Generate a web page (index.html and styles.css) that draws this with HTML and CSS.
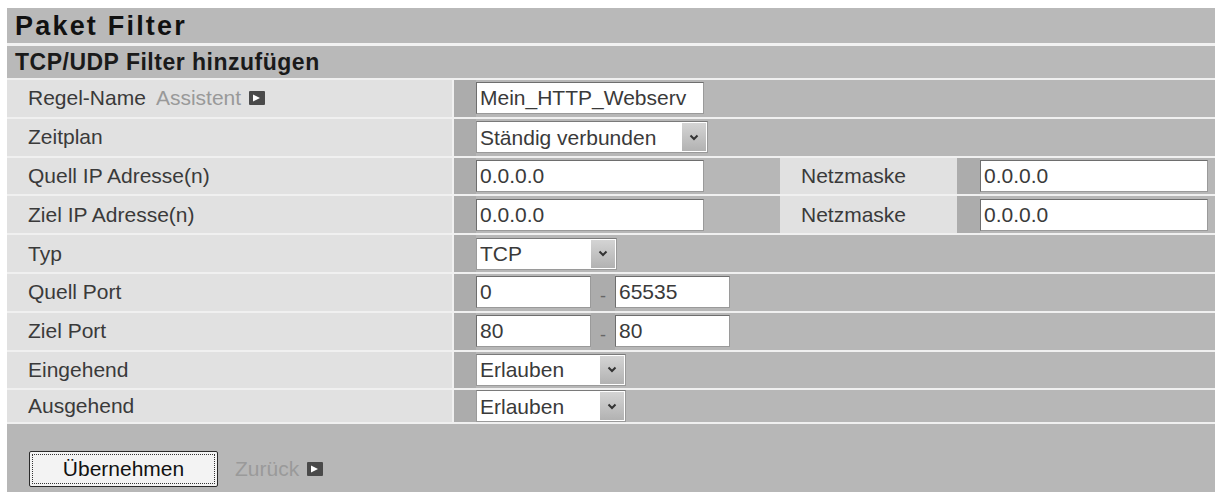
FILE: index.html
```html
<!DOCTYPE html>
<html lang="de">
<head>
    <meta charset="UTF-8">
    <title>Paket Filter</title>
    <link rel="stylesheet" href="styles.css">
</head>
<body>
    <div class="panel">
        <div class="title">Paket Filter</div>
        <div class="subtitle">TCP/UDP Filter hinzufügen</div>

        <form class="filter-form" onsubmit="return false">
            <div class="row">
                <div class="label">Regel-Name
                    <a class="link assist">Assistent
                        <svg class="go" width="16" height="14" viewBox="0 0 16 14"><rect width="16" height="14" rx="1" fill="#4a4a4a"/><polygon points="4,3.5 11,7 4,10.5" fill="#fff"/></svg>
                    </a>
                </div>
                <div class="stripe"></div>
                <div class="value"><input type="text" class="field ip" value="Mein_HTTP_Webserv"></div>
            </div>

            <div class="row">
                <div class="label">Zeitplan</div>
                <div class="stripe"></div>
                <div class="value">
                    <div class="pick w-plan">
                        <select><option>Ständig verbunden</option></select>
                        <span class="arrow"><svg width="10" height="7" viewBox="0 0 10 7"><path d="M1.5 1.5 L5 5 L8.5 1.5" stroke="#333" stroke-width="2" fill="none"/></svg></span>
                    </div>
                </div>
            </div>

            <div class="row row-mask">
                <div class="label">Quell IP Adresse(n)</div>
                <div class="stripe"></div>
                <div class="value"><input type="text" class="field ip" value="0.0.0.0"></div>
                <div class="label plain">Netzmaske</div>
                <div class="stripe"></div>
                <div class="value"><input type="text" class="field ip" value="0.0.0.0"></div>
            </div>

            <div class="row row-mask">
                <div class="label">Ziel IP Adresse(n)</div>
                <div class="stripe"></div>
                <div class="value"><input type="text" class="field ip" value="0.0.0.0"></div>
                <div class="label plain">Netzmaske</div>
                <div class="stripe"></div>
                <div class="value"><input type="text" class="field ip" value="0.0.0.0"></div>
            </div>

            <div class="row">
                <div class="label">Typ</div>
                <div class="stripe"></div>
                <div class="value">
                    <div class="pick w-type">
                        <select><option>TCP</option><option>UDP</option></select>
                        <span class="arrow"><svg width="10" height="7" viewBox="0 0 10 7"><path d="M1.5 1.5 L5 5 L8.5 1.5" stroke="#333" stroke-width="2" fill="none"/></svg></span>
                    </div>
                </div>
            </div>

            <div class="row row-port">
                <div class="label">Quell Port</div>
                <div class="stripe"></div>
                <div class="value"><input type="text" class="field port" value="0"></div>
                <div class="stripe dash">-</div>
                <div class="value"><input type="text" class="field port" value="65535"></div>
                <div class="value"></div>
            </div>

            <div class="row row-port">
                <div class="label">Ziel Port</div>
                <div class="stripe"></div>
                <div class="value"><input type="text" class="field port" value="80"></div>
                <div class="stripe dash">-</div>
                <div class="value"><input type="text" class="field port" value="80"></div>
                <div class="value"></div>
            </div>

            <div class="row">
                <div class="label">Eingehend</div>
                <div class="stripe"></div>
                <div class="value">
                    <div class="pick w-allow">
                        <select><option>Erlauben</option><option>Verweigern</option></select>
                        <span class="arrow"><svg width="10" height="7" viewBox="0 0 10 7"><path d="M1.5 1.5 L5 5 L8.5 1.5" stroke="#333" stroke-width="2" fill="none"/></svg></span>
                    </div>
                </div>
            </div>

            <div class="row row-last">
                <div class="label">Ausgehend</div>
                <div class="stripe"></div>
                <div class="value">
                    <div class="pick w-allow">
                        <select><option>Erlauben</option><option>Verweigern</option></select>
                        <span class="arrow"><svg width="10" height="7" viewBox="0 0 10 7"><path d="M1.5 1.5 L5 5 L8.5 1.5" stroke="#333" stroke-width="2" fill="none"/></svg></span>
                    </div>
                </div>
            </div>

            <div class="actions">
                <button type="submit" class="btn">Übernehmen</button>
                <a class="link back">Zurück
                    <svg class="go" width="16" height="14" viewBox="0 0 16 14"><rect width="16" height="14" rx="1" fill="#4a4a4a"/><polygon points="4,3.5 11,7 4,10.5" fill="#fff"/></svg>
                </a>
            </div>
        </form>
    </div>
</body>
</html>
```

FILE: styles.css
```css
* {
    margin: 0;
    padding: 0;
    box-sizing: border-box;
}

body {
    background-color: #fff;
    font-family: 'Liberation Sans', Arial, sans-serif;
    font-size: 21px;
    color: #3a3a3a;
}

input, select, button {
    font: inherit;
}

.panel {
    margin: 8px 6px 0 7px;
}

.title {
    height: 35px;
    padding: 2px 0 0 8px;
    background-color: #b9b9b9;
    color: #111;
    font-size: 27px;
    font-weight: bold;
    letter-spacing: 2.2px;
    line-height: 32px;
}

.subtitle {
    height: 35px;
    padding: 1px 0 0 8px;
    border-top: 3px solid #f2f2f2;
    background-color: #b9b9b9;
    color: #1a1a1a;
    font-size: 23px;
    font-weight: bold;
    letter-spacing: 0.5px;
    line-height: 30px;
}

.row {
    display: grid;
    grid-template-columns: 447px 22px 1fr;
    height: 38.8px;
    border-top: 2px solid #f0f0f0;
    background-color: #b7b7b7;
}

.row-mask {
    grid-template-columns: 447px 22px 304px 177px 23px 1fr;
}

.row-port {
    grid-template-columns: 447px 22px 115px 24px 115px 1fr;
}

.row-last {
    height: 33.6px;
}

.label {
    display: flex;
    align-items: center;
    padding-left: 21px;
    background-color: #e1e1e1;
    border-right: 2px solid #f0f0f0;
    white-space: nowrap;
}

.label.plain {
    border-right: none;
}

.stripe {
    background-color: #acacac;
}

.dash {
    display: flex;
    align-items: flex-end;
    justify-content: center;
    padding-bottom: 4px;
    color: #666;
    font-size: 18px;
}

.value {
    display: flex;
    align-items: center;
}

.field {
    height: 32px;
    padding: 0 3px;
    border: 1px solid #9a9a9a;
    border-top-color: #6e6e6e;
    border-left-color: #6e6e6e;
    background-color: #fff;
    color: #3a3a3a;
    outline: none;
}

.field.ip {
    width: 228px;
}

.field.port {
    width: 115px;
}

.link {
    display: inline-flex;
    align-items: center;
    color: #999;
    cursor: pointer;
}

.assist {
    margin-left: 10px;
}

.go {
    margin-left: 8px;
}

/* Auswahllisten mit eigenem Pfeil */
.pick {
    position: relative;
    height: 32px;
}

.pick select {
    width: 100%;
    height: 100%;
    padding: 0 28px 0 3px;
    border: 1px solid #9a9a9a;
    border-top-color: #7a7a7a;
    background-color: #fff;
    color: #3a3a3a;
    appearance: none;
    -webkit-appearance: none;
    outline: none;
}

.pick .arrow {
    position: absolute;
    top: 2px;
    right: 2px;
    bottom: 2px;
    width: 24px;
    display: flex;
    align-items: center;
    justify-content: center;
    background: linear-gradient(#d4d4d4, #b2b2b2);
    pointer-events: none;
}

.w-plan { width: 232px; }
.w-type { width: 141px; }
.w-allow { width: 150px; }

.actions {
    display: flex;
    align-items: center;
    gap: 17px;
    padding: 27px 22px 12px;
    border-top: 2px solid #f0f0f0;
    background-color: #b7b7b7;
}

.btn {
    width: 189px;
    height: 36px;
    border: 1px solid #2a2a2a;
    border-radius: 2px;
    background-color: #f3f3f3;
    color: #111;
    outline: 1px dotted #333;
    outline-offset: -4px;
    cursor: pointer;
}

.back {
    color: #9a9a9a;
}
```
